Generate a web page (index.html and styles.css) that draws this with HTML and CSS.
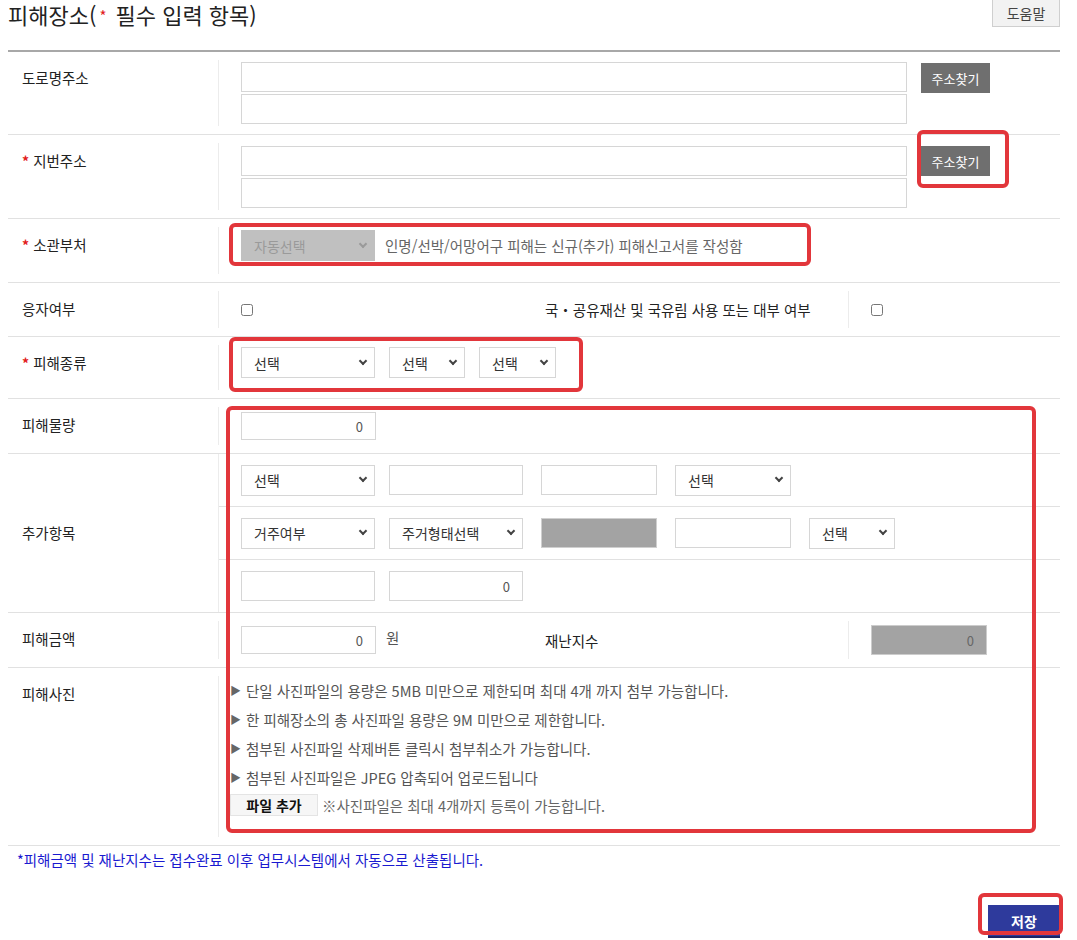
FILE: index.html
```html
<!DOCTYPE html>
<html lang="ko">
<head>
    <meta charset="UTF-8">
    <meta name="viewport" content="width=device-width, initial-scale=1.0">
    <title>피해장소</title>
    <link rel="stylesheet" href="styles.css">
</head>
<body>

<div class="wrap">

    <!-- 제목 -->
    <div class="head">
        <h2 class="title">피해장소(<span class="req">*</span> 필수 입력 항목)</h2>
        <button class="help">도움말</button>
    </div>

    <!-- 입력 폼 -->
    <div class="form">

        <div class="row h83">
            <div class="lbl">도로명주소</div>
            <div class="cnt top">
                <div class="addr">
                    <input class="txt wide" type="text">
                    <input class="txt wide" type="text">
                </div>
                <button class="btn-find">주소찾기</button>
            </div>
        </div>

        <div class="row h84">
            <div class="lbl"><span class="req">*</span> 지번주소</div>
            <div class="cnt top">
                <div class="addr">
                    <input class="txt wide" type="text">
                    <input class="txt wide" type="text">
                </div>
                <button class="btn-find">주소찾기</button>
            </div>
        </div>

        <div class="row h64">
            <div class="lbl"><span class="req">*</span> 소관부처</div>
            <div class="cnt up">
                <div class="sel w134 off"><span>자동선택</span></div>
                <span class="hint">인명/선박/어망어구 피해는 신규(추가) 피해신고서를 작성함</span>
            </div>
        </div>

        <div class="row h54">
            <div class="lbl">응자여부</div>
            <div class="cnt half"><input type="checkbox" class="chk"></div>
            <div class="lbl2">국・공유재산 및 국유림 사용 또는 대부 여부</div>
            <div class="cnt2"><input type="checkbox" class="chk"></div>
        </div>

        <div class="row h62">
            <div class="lbl"><span class="req">*</span> 피해종류</div>
            <div class="cnt up">
                <div class="sel w134"><span>선택</span></div>
                <div class="sel w76"><span>선택</span></div>
                <div class="sel w77"><span>선택</span></div>
            </div>
        </div>

        <div class="row h55">
            <div class="lbl">피해물량</div>
            <div class="cnt">
                <input class="txt w135 num" type="text" value="0">
            </div>
        </div>

        <div class="row h159">
            <div class="lbl mid">추가항목</div>
            <div class="cnt subs">
                <div class="sub">
                    <div class="sel w134"><span>선택</span></div>
                    <input class="txt w134" type="text">
                    <input class="txt w116 ml" type="text">
                    <div class="sel w116 ml"><span>선택</span></div>
                </div>
                <div class="sub">
                    <div class="sel w134"><span>거주여부</span></div>
                    <div class="sel w134"><span>주거형태선택</span></div>
                    <div class="gray w116 ml"></div>
                    <input class="txt w116 ml" type="text">
                    <div class="sel w85 ml"><span>선택</span></div>
                </div>
                <div class="sub">
                    <input class="txt w134" type="text">
                    <input class="txt w134 num" type="text" value="0">
                </div>
            </div>
        </div>

        <div class="row h55">
            <div class="lbl">피해금액</div>
            <div class="cnt half">
                <input class="txt w135 num" type="text" value="0">
                <span class="unit">원</span>
            </div>
            <div class="lbl2">재난지수</div>
            <div class="cnt2">
                <input class="txt w116 num dim" type="text" value="0" readonly>
            </div>
        </div>

        <div class="row h178">
            <div class="lbl">피해사진</div>
            <div class="cnt photo">
                <ul class="guide">
                    <li>단일 사진파일의 용량은 5MB 미만으로 제한되며 최대 4개 까지 첨부 가능합니다.</li>
                    <li>한 피해장소의 총 사진파일 용량은 9M 미만으로 제한합니다.</li>
                    <li>첨부된 사진파일 삭제버튼 클릭시 첨부취소가 가능합니다.</li>
                    <li>첨부된 사진파일은 JPEG 압축되어 업로드됩니다</li>
                </ul>
                <div class="file-row">
                    <button class="btn-file">파일 추가</button>
                    <span class="file-note">※사진파일은 최대 4개까지 등록이 가능합니다.</span>
                </div>
            </div>
        </div>

    </div>

    <p class="notice">*피해금액 및 재난지수는 접수완료 이후 업무시스템에서 자동으로 산출됩니다.</p>

    <div class="foot">
        <button class="btn-save">저장</button>
    </div>

</div>

<!-- 강조 표시 -->
<div class="mark m1"></div>
<div class="mark m2"></div>
<div class="mark m3"></div>
<div class="mark m4"></div>
<div class="mark m5"></div>

</body>
</html>
```

FILE: styles.css
```css
body {
    margin: 0;
    padding: 0;
    font-family: "Noto Sans CJK KR", "Noto Sans", sans-serif;
    font-size: 14.5px;
    color: #222;
    background-color: #fff;
    position: relative;
    min-height: 940px;
}
.wrap {
    width: 1052px;
    margin-left: 8px;
}
.head {
    height: 50px;
    display: flex;
    justify-content: space-between;
    align-items: flex-start;
}
.title {
    margin: 0;
    font-size: 22px;
    font-weight: normal;
    line-height: 28px;
    color: #222;
}
.title .req {
    font-size: 15px;
    vertical-align: 2px;
    margin: 0 3px;
}
.req {
    color: #e21b1b;
}
.help {
    width: 68px;
    height: 29px;
    margin-top: -2px;
    border: 1px solid #cfcfcf;
    background-color: #f2f2f2;
    color: #444;
    font-family: inherit;
    font-size: 14px;
    padding: 0;
}
.form {
    border-top: 2px solid #a8a8a8;
}
.row {
    display: flex;
    box-sizing: border-box;
    border-bottom: 1px solid #e1e1e1;
}
.h83 { height: 83px; }
.h84 { height: 84px; }
.h64 { height: 64px; }
.h54 { height: 54px; }
.h62 { height: 62px; }
.h55 { height: 55px; }
.h159 { height: 159px; }
.h178 { height: 178px; }

.lbl {
    width: 211px;
    margin: 8px 0;
    padding: 8px 0 0 14px;
    box-sizing: border-box;
    border-right: 1px solid #ececec;
    font-size: 14.5px;
    line-height: 20px;
    color: #222;
}
.lbl .req {
    font-size: 14px;
    font-weight: bold;
}
.lbl.mid {
    display: flex;
    align-items: center;
    padding-top: 0;
    margin: 0;
}
.cnt {
    flex: 1;
    display: flex;
    align-items: center;
    gap: 14px;
    padding-left: 22px;
}
.cnt.top .btn-find {
    align-self: flex-start;
    margin-top: 11px;
}
.cnt.up {
    padding-bottom: 10px;
}
.cnt.half {
    flex: none;
    width: 315px;
    box-sizing: border-box;
    gap: 10px;
}
.lbl2 {
    width: 315px;
    margin: 8px 0;
    padding-left: 11px;
    box-sizing: border-box;
    border-right: 1px solid #ececec;
    display: flex;
    align-items: center;
    font-size: 14.5px;
    color: #222;
}
.cnt2 {
    flex: 1;
    display: flex;
    align-items: center;
    padding-left: 22px;
}

.addr {
    display: flex;
    flex-direction: column;
    gap: 2px;
}
.txt {
    height: 30px;
    box-sizing: border-box;
    border: 1px solid #d6d6d6;
    background-color: #fff;
    font-family: inherit;
    font-size: 13px;
    color: #555;
    padding: 0 9px;
    margin: 0;
    outline: none;
}
.wide { width: 666px; }
.w135 { width: 135px; }
.w134 { width: 134px; }
.w116 { width: 116px; }
.w85 { width: 86px; }
.w76 { width: 76px; }
.w77 { width: 77px; }
.ml { margin-left: 4px; }
.num {
    text-align: right;
    padding-right: 12px;
}
.h55 .txt.w135 {
    height: 28px;
}
.dim {
    background-color: #a3a3a3;
    border-color: #ccc;
    color: #666;
}
.gray {
    height: 30px;
    background-color: #a3a3a3;
    border: 1px solid #cfcfcf;
    box-sizing: border-box;
}
.btn-find {
    width: 69px;
    height: 30px;
    border: none;
    background-color: #6f6f6f;
    color: #fff;
    font-family: inherit;
    font-size: 13px;
    padding: 0;
}

/* 선택 박스 */
.sel {
    height: 31px;
    box-sizing: border-box;
    border: 1px solid #d6d6d6;
    background-color: #fff;
    display: flex;
    align-items: center;
    justify-content: space-between;
    padding: 0 8px 0 12px;
    font-size: 14px;
    color: #333;
}
.sel::after {
    content: "";
    width: 4px;
    height: 4px;
    border-right: 2px solid #444;
    border-bottom: 2px solid #444;
    transform: rotate(45deg);
    margin-top: -4px;
}
.sel.off {
    background-color: #c0c0c0;
    border-color: #c0c0c0;
    color: #9a9a9a;
}
.sel.off::after {
    border-color: #9a9a9a;
}
.hint {
    margin-left: -4px;
    color: #666;
}
.chk {
    width: 12px;
    height: 12px;
    margin: 0;
}
.unit {
    color: #555;
    margin-top: -6px;
}

/* 추가항목 */
.cnt.subs {
    flex-direction: column;
    align-items: stretch;
    gap: 0;
    padding-left: 0;
}
.sub {
    flex: 1;
    display: flex;
    align-items: center;
    gap: 14px;
    padding-left: 22px;
    border-bottom: 1px solid #e1e1e1;
}
.sub:last-child {
    border-bottom: none;
}

/* 사진 */
.cnt.photo {
    flex-direction: column;
    align-items: flex-start;
    gap: 0;
    padding: 8px 0 0 11px;
}
.guide {
    list-style: none;
    margin: 0;
    padding: 0;
}
.guide li {
    height: 29px;
    line-height: 29px;
    color: #555;
}
.guide li::before {
    content: "▶";
    color: #666;
    font-size: 11px;
    margin-right: 5px;
    vertical-align: top;
}
.file-row {
    display: flex;
    align-items: center;
    gap: 4px;
    margin-top: 2px;
}
.btn-file {
    width: 88px;
    height: 22px;
    border: 1px solid #e4e4e4;
    background-color: #f6f6f6;
    font-family: inherit;
    font-size: 14px;
    font-weight: bold;
    color: #111;
    padding: 0;
}
.file-note {
    color: #666;
}

.notice {
    margin: 4px 0 0 9px;
    line-height: 20px;
    color: #1a1ad0;
}
.foot {
    display: flex;
    justify-content: flex-end;
    margin-top: 35px;
}
.btn-save {
    width: 72px;
    height: 31px;
    border: none;
    background-color: #2e3a9c;
    box-shadow: 0 2px 0 #1b2466;
    color: #fff;
    font-family: inherit;
    font-size: 14px;
    font-weight: bold;
    padding: 0;
}

/* 빨간 강조 박스 */
.mark {
    position: absolute;
    box-sizing: border-box;
    border: 4px solid #e2363b;
    border-radius: 6px;
}
.m1 { left: 917px; top: 130px; width: 92px; height: 58px; }
.m2 { left: 229px; top: 223px; width: 582px; height: 43px; }
.m3 { left: 229px; top: 337px; width: 354px; height: 55px; }
.m4 { left: 226px; top: 406px; width: 810px; height: 427px; }
.m5 { left: 978px; top: 893px; width: 85px; height: 42px; }
```
